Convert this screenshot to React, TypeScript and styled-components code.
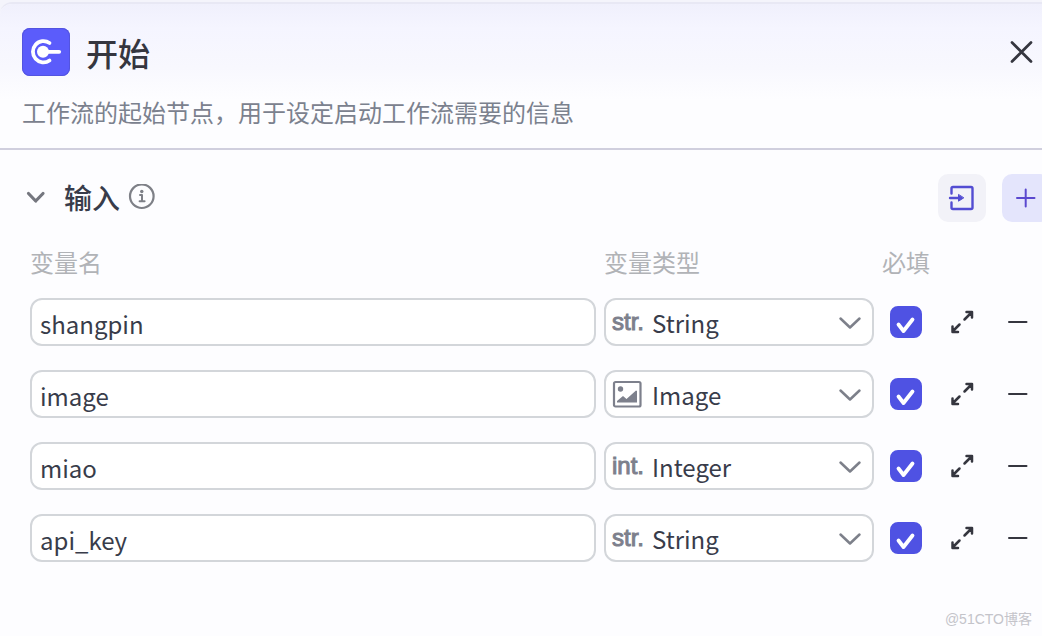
import React, { useState } from "react";
import styled, { createGlobalStyle } from "styled-components";

const GlobalStyle = createGlobalStyle`
  * { box-sizing: border-box; }
  body {
    margin: 0;
    background: #f4f4fb;
    color: #383c4a;
    font-family: "Noto Sans CJK SC", sans-serif;
  }
  button, input, select { font: inherit; color: inherit; margin: 0; }
`;

const Panel = styled.main`
  position: relative;
  min-height: calc(100vh - 2px);
  margin-top: 2px;
  border-top: 2px solid #e8e8f4;
  border-top-left-radius: 12px;
  background: #fdfdff;
  overflow: hidden;
`;

const Header = styled.header`
  padding: 24px 8px 16px 22px;
  border-bottom: 2px solid #d0cfde;
  background: linear-gradient(#f0f0fc, #f5f5ff 24px, #f8f8fe 64px, #fdfdff 96px);
`;

const TitleRow = styled.div`
  display: flex;
  align-items: center;
  gap: 16px;
`;

const NodeIcon = styled.span`
  display: grid;
  width: 48px;
  height: 48px;
  border-radius: 8px;
  background: #5b5cfb;
  box-shadow: inset 0 0 0 1px #5354e0;
`;

const Title = styled.h1`
  flex: 1;
  margin: 0;
  font-size: 32px;
  line-height: 48px;
  font-weight: 500;
  color: #35363f;
`;

const Description = styled.p`
  margin: 20px 0 0;
  padding-bottom: 4px;
  font-size: 24px;
  line-height: 32px;
  color: #7b818e;
`;

const IconButton = styled.button<{ $size?: number; $bg?: string; $color?: string }>`
  display: grid;
  place-items: center;
  flex: none;
  width: ${(p) => p.$size ?? 48}px;
  height: ${(p) => p.$size ?? 48}px;
  padding: 0;
  border: 0;
  border-radius: 10px;
  background: ${(p) => p.$bg ?? "transparent"};
  color: ${(p) => p.$color ?? "#35363f"};
  cursor: pointer;
`;

/* The trailing column runs slightly past the panel's clipped edge. */
const Section = styled.section`
  margin-right: -8px;
  padding: 24px 0 24px 22px;
`;

const SectionHead = styled.div`
  display: flex;
  align-items: center;
  height: 48px;
`;

const SectionTitle = styled.h2`
  margin: 0 8px 0 14px;
  padding-bottom: 2px;
  font-size: 28px;
  line-height: 44px;
  font-weight: 500;
`;

const Actions = styled.div`
  display: flex;
  gap: 16px;
  margin-left: auto;
`;

const Table = styled.table`
  width: calc(100% - 8px);
  margin-left: 8px;
  table-layout: fixed;
  border-collapse: collapse;
`;

const HeadCell = styled.th<{ $width?: number }>`
  width: ${(p) => (p.$width ? `${p.$width}px` : "auto")};
  height: 76px;
  padding: 4px 0 0;
  text-align: left;
  font-size: 24px;
  line-height: 36px;
  font-weight: 400;
  color: #b1b3b7;
`;

const Cell = styled.td<{ $center?: boolean }>`
  height: 72px;
  padding: 0 ${(p) => (p.$center ? 0 : 8)}px 24px 0;
  vertical-align: top;
  > button { margin: 0 auto; }
`;

const NameInput = styled.input`
  display: block;
  width: 100%;
  height: 48px;
  padding: 2px 8px 0;
  border: 2px solid #d3d6da;
  border-radius: 12px;
  background: #fff;
  font-size: 24px;
  outline: none;
`;

const Stack = styled.div`
  display: grid;
  align-items: center;
  > * { grid-area: 1 / 1; }
`;

const TypeSelect = styled.select`
  appearance: none;
  width: 100%;
  height: 48px;
  padding: 0 44px 0 46px;
  border: 2px solid #d3d6da;
  border-radius: 12px;
  background: #fff;
  font-size: 24px;
  outline: none;
`;

const TypeMark = styled.span`
  display: flex;
  margin-left: 8px;
  justify-self: start;
  pointer-events: none;
  font-family: "Liberation Sans", sans-serif;
  font-size: 24px;
  line-height: 32px;
  -webkit-text-stroke: 1px currentColor;
  color: #7d808c;
`;

const SelectArrow = styled.svg`
  justify-self: end;
  margin-right: 12px;
  color: #7d808a;
  pointer-events: none;
`;

const CheckLabel = styled.label`
  display: grid;
  width: 32px;
  height: 32px;
  margin: 8px;
  > * { grid-area: 1 / 1; }
  svg { pointer-events: none; }
  input:not(:checked) + svg { visibility: hidden; }
`;

const Checkbox = styled.input`
  appearance: none;
  width: 32px;
  height: 32px;
  border: 2px solid #4f52e3;
  border-radius: 8px;
  &:checked { background: #4f52e3; }
`;

const Watermark = styled.small`
  position: absolute;
  right: 10px;
  bottom: 7px;
  font-family: "Liberation Sans", "Noto Sans CJK SC", sans-serif;
  font-size: 14px;
  line-height: 20px;
  color: #c4c4ca;
`;

type VarType = "String" | "Image" | "Integer";
type Variable = { name: string; type: VarType; required: boolean };

const initial: Variable[] = [
  { name: "shangpin", type: "String", required: true },
  { name: "image", type: "Image", required: true },
  { name: "miao", type: "Integer", required: true },
  { name: "api_key", type: "String", required: true },
];

const ImageGlyph = () => (
  <svg width="30" height="28" viewBox="0 0 30 28" fill="none" aria-hidden="true">
    <rect x="2" y="2" width="26.500" height="24.500" rx="1.500" stroke="currentColor" strokeWidth="2.200" />
    <circle cx="8.500" cy="9" r="2.700" fill="currentColor" />
    <path d="M5 22.500v-1.500l6-5 3.500 3L24 10.500l1 .5V22.500z" fill="currentColor" />
  </svg>
);

const typeMarks: Record<VarType, React.ReactNode> = {
  String: "str.",
  Image: <ImageGlyph />,
  Integer: "int.",
};

const stroke = {
  fill: "none",
  stroke: "currentColor",
  strokeLinecap: "round" as const,
  strokeLinejoin: "round" as const,
  "aria-hidden": true,
};

export default function App() {
  const [rows, setRows] = useState(initial);
  const update = (index: number, patch: Partial<Variable>) =>
    setRows(rows.map((row, i) => (i === index ? { ...row, ...patch } : row)));

  return (
    <>
      <GlobalStyle />
      <Panel>
        <Header>
          <TitleRow>
            <NodeIcon>
              <svg width="48" height="48" viewBox="0 0 48 48" aria-hidden="true">
                <path d="M27.500 15A10.600 10.600 0 1 0 27.500 32.500" fill="none" stroke="#fff" strokeWidth="3.800" strokeLinecap="round" />
                <circle cx="21" cy="23.800" r="6" fill="#fff" />
                <path d="M21 23.800H37.200" stroke="#fff" strokeWidth="3.800" strokeLinecap="round" />
              </svg>
            </NodeIcon>
            <Title>开始</Title>
            <IconButton $size={28} aria-label="关闭">
              <svg width="28" height="28" viewBox="0 0 28 28" strokeWidth="2.700" {...stroke}>
                <path d="M6 4.500 25 23.500M25 4.500 6 23.500" />
              </svg>
            </IconButton>
          </TitleRow>
          <Description>工作流的起始节点，用于设定启动工作流需要的信息</Description>
        </Header>

        <Section>
          <SectionHead>
            <IconButton $size={28} $color="#75777f" aria-label="收起">
              <svg width="28" height="28" viewBox="0 0 28 28" strokeWidth="3.200" {...stroke}>
                <path d="M6.500 9.500 13.700 17 21 9.500" />
              </svg>
            </IconButton>
            <SectionTitle>输入</SectionTitle>
            <IconButton $size={28} $color="#7e8087" aria-label="说明">
              <svg width="28" height="28" viewBox="0 0 28 28" strokeWidth="2.200" {...stroke}>
                <circle cx="13.800" cy="12.200" r="11.800" />
                <path d="M12 11h2v6.200M11.600 17.200h5" strokeWidth="2" />
                <circle cx="13.800" cy="7.500" r="1.700" fill="currentColor" stroke="none" />
              </svg>
            </IconButton>
            <Actions>
              <IconButton $bg="#f2f2f8" $color="#534dd2" aria-label="导入">
                <svg width="48" height="48" viewBox="0 0 48 48" strokeWidth="2.400" {...stroke}>
                  <path d="M13.500 19.500V14.500Q13.500 13 15 13H33Q34.500 13 34.500 14.500V33.500Q34.500 35 33 35H15Q13.500 35 13.500 33.500V28.500" />
                  <path d="M12 24H21" />
                  <path d="M20.500 20.800V27.200L25.500 24z" fill="currentColor" strokeWidth="1" />
                </svg>
              </IconButton>
              <IconButton $bg="#e4e5fc" $color="#5a48cf" aria-label="添加">
                <svg width="48" height="48" viewBox="0 0 48 48" strokeWidth="2" {...stroke}>
                  <path d="M15 24H32.500M23.700 15.500V32.500" />
                </svg>
              </IconButton>
            </Actions>
          </SectionHead>

          <Table>
            <thead>
              <tr>
                <HeadCell scope="col">变量名</HeadCell>
                <HeadCell scope="col" $width={278}>变量类型</HeadCell>
                <HeadCell scope="col" $width={56}>必填</HeadCell>
                <HeadCell scope="col" $width={48} aria-label="展开" />
                <HeadCell scope="col" $width={64} aria-label="删除" />
              </tr>
            </thead>
            <tbody>
              {rows.map((row, i) => (
                <tr key={i}>
                  <Cell>
                    <NameInput
                      aria-label="变量名"
                      value={row.name}
                      onChange={(e) => update(i, { name: e.target.value })}
                    />
                  </Cell>
                  <Cell>
                    <Stack>
                      <TypeSelect
                        aria-label="变量类型"
                        value={row.type}
                        onChange={(e) => update(i, { type: e.target.value as VarType })}
                      >
                        <option>String</option>
                        <option>Image</option>
                        <option>Integer</option>
                      </TypeSelect>
                      <TypeMark>{typeMarks[row.type]}</TypeMark>
                      <SelectArrow width="24" height="24" viewBox="0 0 24 24" strokeWidth="2.500" {...stroke}>
                        <path d="M2.500 8.500 12 17.500 21.500 8.500" />
                      </SelectArrow>
                    </Stack>
                  </Cell>
                  <Cell $center>
                    <CheckLabel>
                      <Checkbox
                        type="checkbox"
                        aria-label="必填"
                        checked={row.required}
                        onChange={(e) => update(i, { required: e.target.checked })}
                      />
                      <svg width="32" height="32" viewBox="0 0 32 32" fill="none" stroke="#fff" strokeWidth="3.800" strokeLinecap="round" strokeLinejoin="round" aria-hidden="true">
                        <path d="M8.500 18.500 13.500 25 22.500 13.500" />
                      </svg>
                    </CheckLabel>
                  </Cell>
                  <Cell $center>
                    <IconButton aria-label="展开">
                      <svg width="48" height="48" viewBox="0 0 48 48" strokeWidth="2.500" {...stroke}>
                        <path d="M26.500 21.500 34 14M28.500 14H34V19.500M21.500 26.500 14.500 33.500M14.500 28.500V34H20" />
                      </svg>
                    </IconButton>
                  </Cell>
                  <Cell $center>
                    <IconButton aria-label="删除" onClick={() => setRows(rows.filter((_, n) => n !== i))}>
                      <svg width="48" height="48" viewBox="0 0 48 48" strokeWidth="2" {...stroke}>
                        <path d="M15 24H32.500" />
                      </svg>
                    </IconButton>
                  </Cell>
                </tr>
              ))}
            </tbody>
          </Table>
        </Section>
        <Watermark>@51CTO博客</Watermark>
      </Panel>
    </>
  );
}
